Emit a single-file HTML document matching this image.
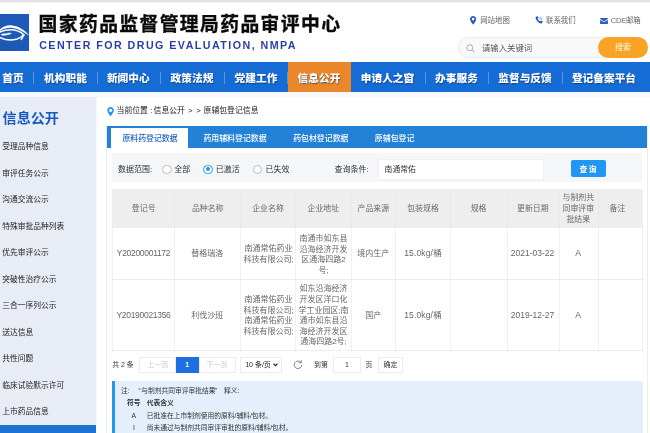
<!DOCTYPE html>
<html lang="zh-CN">
<head>
<meta charset="utf-8">
<title>国家药品监督管理局药品审评中心</title>
<style>
*{box-sizing:border-box;margin:0;padding:0}
html,body{width:650px;height:433px;overflow:hidden;background:#fff}
body{position:relative;will-change:transform;font-family:"Liberation Sans","Noto Sans CJK SC",sans-serif;color:#333;-webkit-text-size-adjust:none}
.a{position:absolute;white-space:nowrap}
/* header */
#strip{left:0;top:0;width:650px;height:2.6px;background:linear-gradient(#e0e0e0 0,#e3e3e3 55%,#fff 100%)}
#logo{left:0;top:14.1px;width:28.6px;height:36.6px;background:#1d59b6;overflow:hidden}
#title{left:38.6px;top:9.8px;font-size:18.8px;line-height:30px;font-weight:700;color:#0a0a0a;letter-spacing:1.4px;-webkit-text-stroke:.35px #0a0a0a}
#sub{left:39.2px;top:36.9px;font-size:10.7px;line-height:16px;font-weight:700;color:#2b3ea6;letter-spacing:1.45px}
.tl{font-size:7.45px;line-height:12px;color:#666;top:15px}
#sbox{left:457.6px;top:37.4px;width:190px;height:20.5px;border-radius:11px;background:#f8f9fa;border:1px solid #eeeeee;box-shadow:0 0 2px rgba(0,0,0,.05)}
#sbtn{left:597.8px;top:37.3px;width:50.2px;height:20.7px;border-radius:11px;background:#f8a226;color:#fffbe8;font-size:8px;line-height:22.6px;text-align:center}
#sph{left:482px;top:42.3px;font-size:8.4px;line-height:12px;color:#555}
/* nav */
#nav{left:0;top:62px;width:650px;height:30px;background:#156cd4}
#navon{left:287.8px;top:62px;width:63px;height:30px;background:#ea872a}
.n{top:62.5px;height:30px;line-height:30px;text-shadow:.5px .5px 1px rgba(0,30,90,.55);font-size:10.7px;font-weight:900;color:#fff;transform:translateX(-50%)}
.ns{top:71.5px;width:1px;height:12px;background:rgba(255,255,255,.28)}
/* page */
#pagebg{left:0;top:92px;width:650px;height:341px;background:#f7f8fb}
#side{left:0;top:97px;width:96px;height:336px;background:#e8edf5}
#sideT{left:2.6px;top:108.2px;font-size:14.1px;line-height:20px;font-weight:700;color:#175abd}
.si{left:2.3px;font-size:7.75px;line-height:12px;color:#222}
#sideon{left:0;top:424.5px;width:96px;height:10px;background:#1b74d4}
#main{left:96.5px;top:96.5px;width:553.5px;height:337px;background:#fff}
#rb{left:647px;top:126px;width:1px;height:307px;background:#ececec}
#lb{left:105.5px;top:126px;width:1px;height:307px;background:#ececec}
.cr{top:105.1px;font-size:7.85px;line-height:12px;color:#222;margin-left:-.6px}
#tabs{left:107px;top:125.8px;width:540px;height:22px;background:#2481d8}
#tabon{left:110.8px;top:128px;width:77.5px;height:19.8px;background:#fff}
.t{top:128.8px;height:19.8px;line-height:19.8px;font-size:7.9px;font-weight:500;color:#fff;transform:translateX(-50%)}
#filter{left:112px;top:152.6px;width:529.8px;height:29.8px;background:#f5f6f8}
.f{top:164.3px;font-size:8px;line-height:12px;color:#333}
.r{top:164.6px;width:9.4px;height:9.4px;border-radius:50%;border:1px solid #bbb;background:#fff}
#qin{left:378px;top:159px;width:166.3px;height:20.6px;background:#fff;border:1px solid #f0f1f3}
#qbtn{left:570.6px;top:159.9px;width:35px;height:17.2px;background:#2196f3;color:#fff;font-size:7.8px;font-weight:700;line-height:19.2px;text-align:center;letter-spacing:1.5px;text-indent:1.5px;border-radius:2px}
/* table */
#thead{left:112px;top:189.2px;width:530.6px;height:37.8px;background:#eeeeee}
.vl{top:189.2px;width:1px;height:161.4px;background:rgba(0,0,0,.055)}
.hl{left:112px;width:530.6px;height:1px;background:rgba(0,0,0,.07)}
.d{font-size:8.5px!important;letter-spacing:-.2px}
.c{font-size:8px;line-height:10.6px;color:#666;text-align:center;transform:translate(-50%,-50%);white-space:nowrap}
.h{font-size:7.9px;line-height:11px;color:#686868;text-align:center;transform:translate(-50%,-50%);top:207.9px}
/* pager */
.p{top:357.4px;height:15.8px;line-height:14.4px;font-size:7px;border:1px solid #ececec;background:#fff;text-align:center;color:#333}
.pt{top:359.4px;font-size:6.9px;line-height:12px;color:#333}
/* note */
#note{left:112px;top:381.3px;width:530.6px;height:52px;background:#e4effb}
#noteb{left:112px;top:381.3px;width:2.6px;height:52px;background:#2196f3}
.nt{font-size:6.75px;line-height:12px;color:#333}
</style>
</head>
<body>
<div class="a" id="strip"></div>
<div class="a" id="logo">
<svg width="29" height="37" viewBox="0 0 29 37">
<path d="M-0.500 15.800 C3 12 8 10.800 12.500 11.400 C19 12.300 25 16 29.600 22 C25 18.400 19 14.900 12.500 13.900 C8 13.400 3.500 14.600 -0.500 17.200Z" fill="#fff"/>
<path d="M-0.500 18.200 C5 15.800 12 15.200 17.500 16.800 C20.500 17.800 22.800 19.500 24 21" stroke="#fff" stroke-width="1.400" fill="none" stroke-linecap="round"/>
<path d="M-0.500 23.300 C5 26 12 26.500 17 25 C20 24 22.300 22.500 23.800 20.800" stroke="#fff" stroke-width="1.600" fill="none" stroke-linecap="round"/>
<path d="M23.600 21 C23 22.800 22.300 24.300 21.300 25.600" stroke="#fff" stroke-width="1.400" fill="none" stroke-linecap="round"/>
<path d="M1 20.600 C2.500 19.300 5 20 7 19.400 C8.500 19 10 18.800 11.400 19.400 C9.500 20.500 7.500 20.500 6 21 C4 21.600 2.200 21.700 1 20.600Z" fill="#fff" stroke="#fff" stroke-width=".4"/>
</svg>
</div>
<div class="a" id="title">国家药品监督管理局药品审评中心</div>
<div class="a" id="sub">CENTER FOR DRUG EVALUATION, NMPA</div>

<svg class="a" style="left:470.300px;top:15.800px" width="6.300" height="8.800" viewBox="0 0 12 17"><path d="M6 0C2.7 0 0 2.7 0 6c0 4.3 6 11 6 11s6-6.700 6-11c0-3.300-2.700-6-6-6zm0 8.500A2.500 2.500 0 1 1 6 3.500a2.500 2.500 0 0 1 0 5z" fill="#2a5bc0"/></svg>
<div class="a tl" style="left:480.200px">网站地图</div>
<svg class="a" style="left:535px;top:16px" width="8" height="8" viewBox="0 0 16 16"><path d="M3.200 0.800 L5.600 0.400 L7 4.200 L5.200 5.600 C6 7.600 8 9.800 10.200 10.800 L11.800 9 L15.400 10.600 L14.800 13.200 C14.400 14.600 13 15.200 11.600 14.800 C6.400 13.400 2.400 9.200 1.200 4 C0.900 2.600 1.800 1.100 3.200 0.800Z" fill="#2a5bc0"/><path d="M9 2.500c2.500.3 4.200 2 4.500 4.500M9 5c1.200.2 1.800.8 2 2" stroke="#2a5bc0" stroke-width="1.300" fill="none"/></svg>
<div class="a tl" style="left:546px">联系我们</div>
<svg class="a" style="left:600.400px;top:17.500px" width="8" height="6.300" viewBox="0 0 16 13"><path d="M0 0h16v1.500L8 7 0 1.500z M0 3.500 8 9l8-5.500V13H0z" fill="#2a5bc0"/></svg>
<div class="a tl" style="left:610.800px;letter-spacing:-.15px">CDE邮箱</div>

<div class="a" id="sbox"></div>
<svg class="a" style="left:466px;top:43.500px" width="9" height="9" viewBox="0 0 18 18"><circle cx="7.500" cy="7.500" r="6" fill="none" stroke="#999" stroke-width="1.600"/><path d="M12 12l5 5" stroke="#999" stroke-width="1.600"/></svg>
<div class="a" id="sph">请输入关键词</div>
<div class="a" id="sbtn">搜索</div>

<div class="a" id="nav"></div>
<div class="a" id="navon"></div>
<div class="a n" style="left:13px">首页</div>
<div class="a n" style="left:65.5px">机构职能</div>
<div class="a n" style="left:128.3px">新闻中心</div>
<div class="a n" style="left:192px">政策法规</div>
<div class="a n" style="left:256px">党建工作</div>
<div class="a n" style="left:319px">信息公开</div>
<div class="a n" style="left:387.5px">申请人之窗</div>
<div class="a n" style="left:456.5px">办事服务</div>
<div class="a n" style="left:525px">监督与反馈</div>
<div class="a n" style="left:604px">登记备案平台</div>
<div class="a ns" style="left:33px"></div>
<div class="a ns" style="left:97px"></div>
<div class="a ns" style="left:160px"></div>
<div class="a ns" style="left:223.500px"></div>
<div class="a ns" style="left:287px"></div>

<div class="a ns" style="left:425px"></div>
<div class="a ns" style="left:488px"></div>
<div class="a ns" style="left:562px"></div>

<div class="a" id="pagebg"></div>
<div class="a" id="side"></div>
<div class="a" id="sideT">信息公开</div>
<div class="a si" style="top:141.0px">受理品种信息</div>
<div class="a si" style="top:167.5px">审评任务公示</div>
<div class="a si" style="top:194.0px">沟通交流公示</div>
<div class="a si" style="top:220.5px">特殊审批品种列表</div>
<div class="a si" style="top:247.0px">优先审评公示</div>
<div class="a si" style="top:273.5px">突破性治疗公示</div>
<div class="a si" style="top:300.0px">三合一序列公示</div>
<div class="a si" style="top:326.5px">送达信息</div>
<div class="a si" style="top:353.0px">共性问题</div>
<div class="a si" style="top:379.5px">临床试验默示许可</div>
<div class="a si" style="top:406.0px">上市药品信息</div>
<div class="a" id="sideon"></div>

<div class="a" id="main"></div>
<div class="a" id="lb"></div>
<div class="a" id="rb"></div>
<svg class="a" style="left:107px;top:106.800px" width="7.200" height="9.300" viewBox="0 0 12 17"><path d="M6 0C2.700 0 0 2.700 0 6c0 4.300 6 11 6 11s6-6.700 6-11c0-3.300-2.700-6-6-6zm0 9A3 3 0 1 1 6 3a3 3 0 0 1 0 6z" fill="#2196f3"/></svg>
<div class="a cr" style="left:117.2px">当前位置 :</div><div class="a cr" style="left:154.2px">信息公开</div><div class="a cr" style="left:188.6px">&gt;</div><div class="a cr" style="left:196.8px">&gt;</div><div class="a cr" style="left:204.2px">原辅包登记信息</div>

<div class="a" id="tabs"></div>
<div class="a" id="tabon"></div>
<div class="a t" style="left:150px;color:#1b62c4;font-weight:500">原料药登记数据</div>
<div class="a t" style="left:235px">药用辅料登记数据</div>
<div class="a t" style="left:320.800px">药包材登记数据</div>
<div class="a t" style="left:394.600px">原辅包登记</div>

<div class="a" id="filter"></div>
<div class="a f" style="left:118px">数据范围:</div>
<div class="a r" style="left:162.300px"></div>
<div class="a f" style="left:174.200px">全部</div>
<div class="a r" style="left:203.200px;border-color:#2196f3"></div>
<div class="a" style="left:206px;top:167.400px;width:3.800px;height:3.800px;border-radius:50%;background:#2196f3"></div>
<div class="a f" style="left:215.700px">已激活</div>
<div class="a r" style="left:252.500px"></div>
<div class="a f" style="left:265.400px">已失效</div>
<div class="a f" style="left:334.600px">查询条件:</div>
<div class="a" id="qin"></div>
<div class="a f" style="left:384.600px;font-size:7.800px">南通常佑</div>
<div class="a" id="qbtn">查询</div>

<div class="a hl" style="top:189.200px"></div>
<div class="a hl" style="top:226.800px"></div>
<div class="a hl" style="top:278.600px"></div>
<div class="a hl" style="top:350.300px"></div>
<div class="a vl" style="left:112px"></div>
<div class="a vl" style="left:174.300px"></div>
<div class="a vl" style="left:240.400px"></div>
<div class="a vl" style="left:295px"></div>
<div class="a vl" style="left:351.200px"></div>
<div class="a vl" style="left:395.200px"></div>
<div class="a vl" style="left:450.400px"></div>
<div class="a vl" style="left:506.700px"></div>
<div class="a vl" style="left:558.700px"></div>
<div class="a vl" style="left:597.500px"></div>
<div class="a vl" style="left:642px"></div>

<div class="a" id="thead"></div>
<div class="a vl" style="left:174.300px;height:38px;background:rgba(0,0,0,.02)"></div><div class="a vl" style="left:240.400px;height:38px;background:rgba(0,0,0,.02)"></div><div class="a vl" style="left:295px;height:38px;background:rgba(0,0,0,.02)"></div><div class="a vl" style="left:351.200px;height:38px;background:rgba(0,0,0,.02)"></div><div class="a vl" style="left:395.200px;height:38px;background:rgba(0,0,0,.02)"></div><div class="a vl" style="left:450.400px;height:38px;background:rgba(0,0,0,.02)"></div><div class="a vl" style="left:506.700px;height:38px;background:rgba(0,0,0,.02)"></div><div class="a vl" style="left:558.700px;height:38px;background:rgba(0,0,0,.02)"></div><div class="a vl" style="left:597.500px;height:38px;background:rgba(0,0,0,.02)"></div>
<div class="a h" style="left:143.700px">登记号</div>
<div class="a h" style="left:207.700px">品种名称</div>
<div class="a h" style="left:268px">企业名称</div>
<div class="a h" style="left:323.300px">企业地址</div>
<div class="a h" style="left:373.300px">产品来源</div>
<div class="a h" style="left:423px">包装规格</div>
<div class="a h" style="left:478.600px">规格</div>
<div class="a h" style="left:532.800px">更新日期</div>
<div class="a h" style="left:578.300px">与制剂共<br>同审评审<br>批结果</div>
<div class="a h" style="left:617.500px">备注</div>

<div class="a c d" style="left:143.500px;top:253.4px;letter-spacing:-.3px">Y20200001172</div>
<div class="a c" style="left:207.300px;top:254.2px">替格瑞洛</div>
<div class="a c" style="left:268.500px;top:255.4px">南通常佑药业<br>科技有限公司;</div>
<div class="a c" style="left:323.500px;top:255.2px">南通市如东县<br>沿海经济开发<br>区通海四路2<br>号;</div>
<div class="a c" style="left:373.300px;top:254.2px">境内生产</div>
<div class="a c d" style="left:423px;top:253.2px;letter-spacing:.15px">15.0kg/桶</div>
<div class="a c d" style="left:532.500px;top:253.4px;letter-spacing:0">2021-03-22</div>
<div class="a c" style="left:578.100px;top:253px;font-size:8.600px">A</div>

<div class="a c d" style="left:143.500px;top:315.0px;letter-spacing:-.3px">Y20190021356</div>
<div class="a c" style="left:207.300px;top:316.4px">利伐沙班</div>
<div class="a c" style="left:268.500px;top:316.2px">南通常佑药业<br>科技有限公司;<br>南通常佑药业<br>科技有限公司;</div>
<div class="a c" style="left:323.500px;top:316.4px">如东沿海经济<br>开发区洋口化<br>学工业园区;南<br>通市如东县沿<br>海经济开发区<br>通海四路2号;</div>
<div class="a c" style="left:373.300px;top:316.4px">国产</div>
<div class="a c d" style="left:423px;top:314.9px;letter-spacing:.15px">15.0kg/桶</div>
<div class="a c d" style="left:532.500px;top:315.0px;letter-spacing:0">2019-12-27</div>
<div class="a c" style="left:578.100px;top:314.500px;font-size:8.600px">A</div>

<div class="a pt" style="left:112.300px">共 2 条</div>
<div class="a p" style="left:139.400px;width:37px;color:#c8c8c8">上一页</div>
<div class="a p" style="left:176px;width:22.500px;background:#1e6fe0;border-color:#1e6fe0;color:#fff;font-weight:700">1</div>
<div class="a p" style="left:198.500px;width:37px;color:#c8c8c8">下一页</div>
<div class="a p" style="left:240.200px;width:42.200px;text-align:left;padding-left:4px;color:#222">10 条/页</div>
<svg class="a" style="left:273px;top:363.300px" width="5" height="4" viewBox="0 0 10 8"><path d="M1 1.500l4 4 4-4" stroke="#222" stroke-width="2.200" fill="none"/></svg>
<svg class="a" style="left:292.800px;top:360px" width="10" height="10" viewBox="0 0 20 20"><path d="M15.500 4.500A7.500 7.500 0 1 0 17.500 10" stroke="#666" stroke-width="1.600" fill="none"/><path d="M16.500 0.500v5h-5" stroke="#666" stroke-width="1.600" fill="none"/></svg>
<div class="a pt" style="left:314px">到第</div>
<div class="a p" style="left:333px;width:28px">1</div>
<div class="a pt" style="left:365.400px">页</div>
<div class="a p" style="left:377.700px;width:25.500px">确定</div>

<div class="a" id="note"></div>
<div class="a" id="noteb"></div>
<div class="a nt" style="left:121px;top:385px">注:</div><div class="a nt" style="left:138.400px;top:385px">“</div><div class="a nt" style="left:141.300px;top:385px">与制剂共同审评审批结果</div><div class="a nt" style="left:215px;top:385px">”</div><div class="a nt" style="left:224px;top:385px">释义:</div>
<div class="a nt" style="left:127px;top:396.800px;font-weight:700">符号</div>
<div class="a nt" style="left:146.800px;top:396.800px;font-weight:700">代表含义</div>
<div class="a nt" style="left:131.500px;top:409.800px">A</div>
<div class="a nt" style="left:146.800px;top:409.800px">已批准在上市制剂使用的原料/辅料/包材。</div>
<div class="a nt" style="left:133px;top:421.500px">I</div>
<div class="a nt" style="left:146.800px;top:421.500px">尚未通过与制剂共同审评审批的原料/辅料/包材。</div>
</body>
</html>
